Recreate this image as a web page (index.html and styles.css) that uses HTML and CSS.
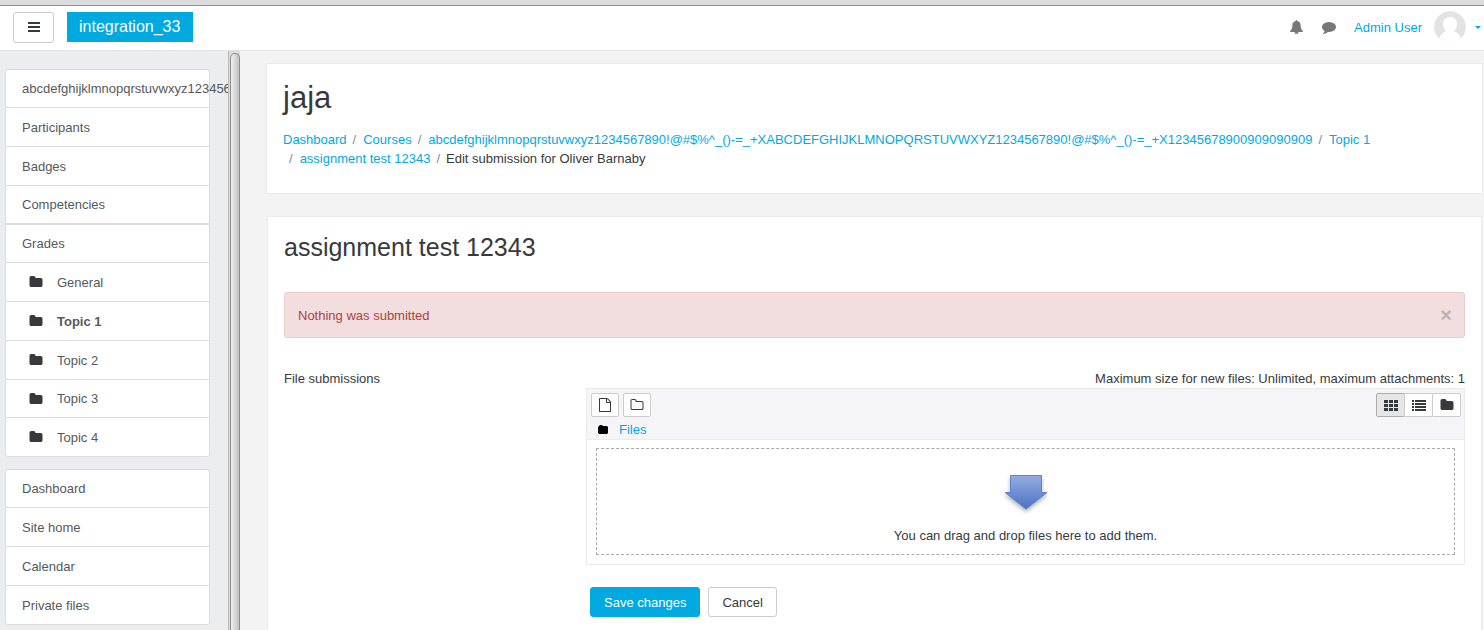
FILE: index.html
```html
<!DOCTYPE html>
<html lang="en">
<head>
<meta charset="utf-8">
<title>Edit submission</title>
<link rel="stylesheet" href="styles.css">
</head>
<body>
<svg class="sprite" aria-hidden="true">
  <symbol id="folder" viewBox="0 0 1792 1792"><path d="M1728 608v704q0 92-66 158t-158 66h-1216q-92 0-158-66t-66-158v-960q0-92 66-158t158-66h320q92 0 158 66t66 158v32h672q92 0 158 66t66 158z"/></symbol>
  <symbol id="folder-o" viewBox="0 0 1792 1792"><path d="M1600 1312v-704q0-40-28-68t-68-28h-704q-40 0-68-28t-28-68v-64q0-40-28-68t-68-28h-320q-40 0-68 28t-28 68v960q0 40 28 68t68 28h1216q40 0 68-28t28-68zm128-704v704q0 92-66 158t-158 66h-1216q-92 0-158-66t-66-158v-960q0-92 66-158t158-66h320q92 0 158 66t66 158v32h672q92 0 158 66t66 158z"/></symbol>
  <symbol id="file-o" viewBox="0 0 1792 1792"><path d="M1596 380q28 28 48 76t20 88v1152q0 40-28 68t-68 28h-1344q-40 0-68-28t-28-68v-1600q0-40 28-68t68-28h896q40 0 88 20t76 48zm-444-244v376h376q-10-29-22-41l-313-313q-12-12-41-22zm384 1528v-1024h-416q-40 0-68-28t-28-68v-416h-768v1536h1280z"/></symbol>
  <symbol id="bars" viewBox="0 0 14 14"><path d="M1 2h12v2H1zM1 6h12v2H1zM1 10h12v2H1z"/></symbol>
  <symbol id="bell" viewBox="0 0 1792 1792"><path d="M912 1696q0-16-16-16-59 0-101.500-42.500t-42.500-101.500q0-16-16-16t-16 16q0 73 51.500 124.500t124.500 51.500q16 0 16-16zm752-288q0 52-38 90t-90 38h-448q0 106-75 181t-181 75-181-75-75-181h-448q-52 0-90-38t-38-90q50-42 91-88t85-119.500 74.500-158.500 50-206 19.500-260q0-152 117-282.500t307-158.500q-8-19-8-39 0-40 28-68t68-28 68 28 28 68q0 20-8 39 190 28 307 158.500t117 282.500q0 139 19.500 260t50 206 74.500 158.500 85 119.500 91 88z"/></symbol>
  <symbol id="comment" viewBox="0 0 1792 1792"><path d="M1792 896q0 174-120 321.500t-326 233-450 85.500q-70 0-145-8-198 175-460 242-49 14-114 22-17 2-30.500-9t-17.500-29v-1q-3-4-.5-12t2-10 4.500-9.500l6-9 7-8.500 8-9q7-8 31-34.500t34.500-38 31-39.500 32.500-51 27-59 26-76q-157-89-247.500-220t-90.500-281q0-130 71-248.500t191-204.500 286-136.500 348-50.500q244 0 450 85.500t326 233 120 321.500z"/></symbol>
  <symbol id="grid" viewBox="0 0 14 12"><path d="M0 1h4v3H0zM5 1h4v3H5zM10 1h4v3h-4zM0 5h4v3H0zM5 5h4v3H5zM10 5h4v3h-4zM0 9h4v3H0zM5 9h4v3H5zM10 9h4v3h-4z"/></symbol>
  <symbol id="list" viewBox="0 0 14 12"><path d="M0 1h2v2H0zM3 1h11v2H3zM0 4h2v2H0zM3 4h11v2H3zM0 7h2v2H0zM3 7h11v2H3zM0 10h2v2H0zM3 10h11v2H3z"/></symbol>
</svg>

<div class="window-edge"></div>
<header class="navbar">
  <button class="btn menu-btn" type="button" aria-label="Side panel"><svg class="icon"><use href="#bars"/></svg></button>
  <a class="brand" href="#">integration_33</a>
  <div class="user-nav">
    <button class="nav-icon" type="button" aria-label="Notifications"><svg class="icon"><use href="#bell"/></svg></button>
    <button class="nav-icon" type="button" aria-label="Messages"><svg class="icon"><use href="#comment"/></svg></button>
    <a class="user-name" href="#">Admin User</a>
    <svg class="avatar" viewBox="0 0 32 32" aria-hidden="true">
      <circle cx="16" cy="16" r="16" fill="#e3e3e3"/>
      <path fill="#fff" d="M16 6c4.500 0 7 3 7 7 0 3-1.200 5.500-3 7 4 1.500 6 4.500 7 8v4H5v-4c1-3.500 3-6.500 7-8-1.800-1.500-3-4-3-7 0-4 2.500-7 7-7z"/>
    </svg>
    <span class="caret"></span>
  </div>
</header>

<div class="page">
  <nav class="sidebar">
    <ul class="list">
      <li><a href="#">abcdefghijklmnopqrstuvwxyz123456</a></li>
      <li><a href="#">Participants</a></li>
      <li><a href="#">Badges</a></li>
      <li class="divided"><a href="#">Competencies</a></li>
      <li><a href="#">Grades</a></li>
      <li class="section"><a href="#"><svg class="icon"><use href="#folder"/></svg>General</a></li>
      <li class="section current"><a href="#"><svg class="icon"><use href="#folder"/></svg>Topic 1</a></li>
      <li class="section"><a href="#"><svg class="icon"><use href="#folder"/></svg>Topic 2</a></li>
      <li class="section"><a href="#"><svg class="icon"><use href="#folder"/></svg>Topic 3</a></li>
      <li class="section"><a href="#"><svg class="icon"><use href="#folder"/></svg>Topic 4</a></li>
    </ul>
    <ul class="list">
      <li><a href="#">Dashboard</a></li>
      <li><a href="#">Site home</a></li>
      <li><a href="#">Calendar</a></li>
      <li><a href="#">Private files</a></li>
    </ul>
  </nav>
  <div class="scroll-track"><div class="scroll-thumb"></div></div>

  <main class="main">
    <section class="card">
      <h1>jaja</h1>
      <ol class="breadcrumb">
        <li><a href="#">Dashboard</a></li>
        <li><a href="#">Courses</a></li>
        <li><a href="#">abcdefghijklmnopqrstuvwxyz1234567890!@#$%^_()-=_+XABCDEFGHIJKLMNOPQRSTUVWXYZ1234567890!@#$%^_()-=_+X12345678900909090909</a></li>
        <li><a href="#">Topic 1</a></li>
        <li><a href="#">assignment test 12343</a></li>
        <li>Edit submission for Oliver Barnaby</li>
      </ol>
    </section>

    <section class="card content">
      <h2>assignment test 12343</h2>
      <div class="alert" role="alert">
        <span>Nothing was submitted</span>
        <button class="close" type="button" aria-label="Close">×</button>
      </div>
      <form class="form">
        <div class="label">File submissions</div>
        <div class="field">
          <div class="limits">Maximum size for new files: Unlimited, maximum attachments: 1</div>
          <div class="manager">
            <div class="toolbar">
              <div class="tools">
                <button class="btn tool" type="button" aria-label="Add file"><svg class="icon"><use href="#file-o"/></svg></button>
                <button class="btn tool" type="button" aria-label="Create folder"><svg class="icon"><use href="#folder-o"/></svg></button>
                <div class="views">
                  <button class="btn tool active" type="button" aria-label="Icons view"><svg class="icon flat"><use href="#grid"/></svg></button>
                  <button class="btn tool" type="button" aria-label="List view"><svg class="icon flat"><use href="#list"/></svg></button>
                  <button class="btn tool" type="button" aria-label="Tree view"><svg class="icon"><use href="#folder"/></svg></button>
                </div>
              </div>
              <div class="path">
                <svg class="path-icon" viewBox="0 0 10 9" aria-hidden="true"><path d="M0 2l1-1 1-1h2l1 1h4l1 1v6l-1 1H1L0 8z"/></svg>
                <a href="#">Files</a>
              </div>
            </div>
            <div class="drop">
              <svg class="arrow" viewBox="0 0 52 44" aria-hidden="true">
                <defs>
                  <linearGradient id="blue" x1="0" y1="0" x2="0" y2="1"><stop offset="0" stop-color="#95acde"/><stop offset="1" stop-color="#4c71c6"/></linearGradient>
                  <filter id="soft" x="-20%" y="-20%" width="140%" height="150%"><feGaussianBlur stdDeviation="2"/></filter>
                </defs>
                <path d="M10 5h32v17h6L26 39 4 22h6z" fill="#000" opacity=".3" filter="url(#soft)"/>
                <path d="M10.500 2.500h31v17h5.500L26 36 5 19.500h5.500z" fill="url(#blue)" stroke="#5f83d0"/>
              </svg>
              <div>You can drag and drop files here to add them.</div>
            </div>
          </div>
          <div class="actions">
            <button class="btn primary" type="submit">Save changes</button>
            <button class="btn" type="button">Cancel</button>
          </div>
        </div>
      </form>
    </section>
  </main>
</div>
</body>
</html>
```

FILE: styles.css
```css
* { box-sizing: border-box; }

body {
  margin: 0;
  height: 100vh;
  overflow: hidden;
  display: flex;
  flex-direction: column;
  background: #f3f3f3;
  color: #373a3c;
  font: 13px/19px "Liberation Sans", Arial, sans-serif;
}

a { color: #00aae0; text-decoration: none; }
h1, h2, ul, ol { margin: 0; padding: 0; font-weight: 400; }
ul, ol { list-style: none; }
button { font: inherit; color: inherit; padding: 0; margin: 0; }

.sprite { display: none; }
.icon { width: 14px; height: 14px; flex: none; fill: currentColor; display: block; }
.icon.flat { height: 12px; }

.btn {
  display: flex;
  align-items: center;
  justify-content: center;
  height: 30px;
  padding: 0 13px;
  background: #fff;
  border: 1px solid #ccc;
  border-radius: 3px;
}
.btn.primary { background: #00aae0; border-color: #00aae0; color: #fff; }

.window-edge { flex: none; height: 6px; background: #dcdcdc; border-bottom: 1px solid #919191; }

.navbar {
  flex: none;
  display: flex;
  align-items: center;
  height: 45px;
  padding: 0 3px 2px 13px;
  background: #fff;
  border-bottom: 1px solid #e3e3e3;
}
.menu-btn { width: 41px; height: 31px; }
.brand { margin-left: 13px; padding: 0 13px 0 12px; background: #00aae0; color: #fff; font-size: 16px; line-height: 30px; }
.user-nav { display: flex; align-items: center; margin-left: auto; }
.nav-icon { margin-right: 18px; background: none; border: 0; color: #777; }
.user-name { margin-right: 12px; }
.avatar { width: 32px; height: 32px; border-radius: 50%; }
.caret { margin-left: 9px; border: 3px solid transparent; border-top-color: #00aae0; border-bottom: 0; }

.page { flex: 1; min-height: 0; display: flex; }

.sidebar { flex: none; width: 228px; padding: 18px 18px 0 5px; background: #ebedef; overflow: hidden; }
.list { margin-bottom: 12px; background: #fff; border: 1px solid #dcdddd; border-radius: 3px; }
.list li { height: 39px; border-bottom: 1px solid #dcdddd; }
.list li:nth-child(4n + 1), .list li:last-child { height: 38px; }
.list li:last-child { border-bottom: 0; }
.list li.divided { border-bottom-width: 2px; }
.list a { display: flex; align-items: center; height: 100%; padding-left: 16px; color: #55595c; white-space: nowrap; }
.list .section a { padding-left: 23px; gap: 14px; }
.list .icon { color: #373a3c; }
.list .current { font-weight: 700; }

.scroll-track { flex: none; width: 12px; padding: 2px 0 0 1px; border-left: 1px solid #b8b8b8; background: #dedede; }
.scroll-thumb {
  height: 100%;
  border: 1px solid #8c8c8c;
  border-bottom: 0;
  border-radius: 5px 5px 0 0;
  background: linear-gradient(90deg, #efefef, #c2c2c2);
}

.main { flex: 1; min-width: 0; padding: 12px 1px 0 26px; }
.card { padding: 16px; background: #fff; border: 1px solid #ebebeb; }
h1 { font-size: 31px; line-height: 36px; }
h2 { font-size: 25px; line-height: 28px; }

.breadcrumb { display: flex; flex-wrap: wrap; margin: 14px 0 9px; }
.breadcrumb li + li::before { content: "/"; padding: 0 7px 0 6px; color: #818a91; }
.breadcrumb li + li:last-child::before { padding-right: 6px; }

.content { margin: 22px 1px 0; }
.alert {
  display: flex;
  align-items: center;
  justify-content: space-between;
  height: 46px;
  margin: 31px 0;
  padding: 0 12px 0 13px;
  background: #f2dede;
  border: 1px solid #ebcccc;
  border-radius: 3px;
  color: #a94442;
}
.close { border: 0; background: none; color: #c1b1b1; font-size: 20px; font-weight: 700; line-height: 20px; }

.form { display: grid; grid-template-columns: 3fr 9fr; column-gap: 9px; }
.limits { text-align: right; }
.manager { border: 1px solid #ebebeb; }
.toolbar { padding: 4px 3px 0 4px; background: #f5f5f7; border-bottom: 1px solid #ebebeb; }
.tools { display: flex; gap: 4px; }
.tool { width: 29px; height: 24px; padding: 0; border-radius: 2px; }
.tools > .tool { width: 28px; }
.views { display: flex; margin-left: auto; }
.views .tool + .tool { margin-left: -1px; border-radius: 0 2px 2px 0; }
.views .active { background: #e6e6e6; border-color: #adadad; }
.path { display: flex; align-items: center; gap: 11px; height: 22px; padding: 3px 0 0 7px; }
.path-icon { width: 10px; height: 9px; fill: #000; }
.drop {
  display: flex;
  flex-direction: column;
  align-items: center;
  margin: 8px 9px 9px;
  padding: 24px 0 9px;
  border: 1px dashed #aaa;
}
.arrow { width: 52px; height: 44px; margin-bottom: 9px; }
.actions { display: flex; gap: 8px; margin: 22px 0 0 4px; }
```
